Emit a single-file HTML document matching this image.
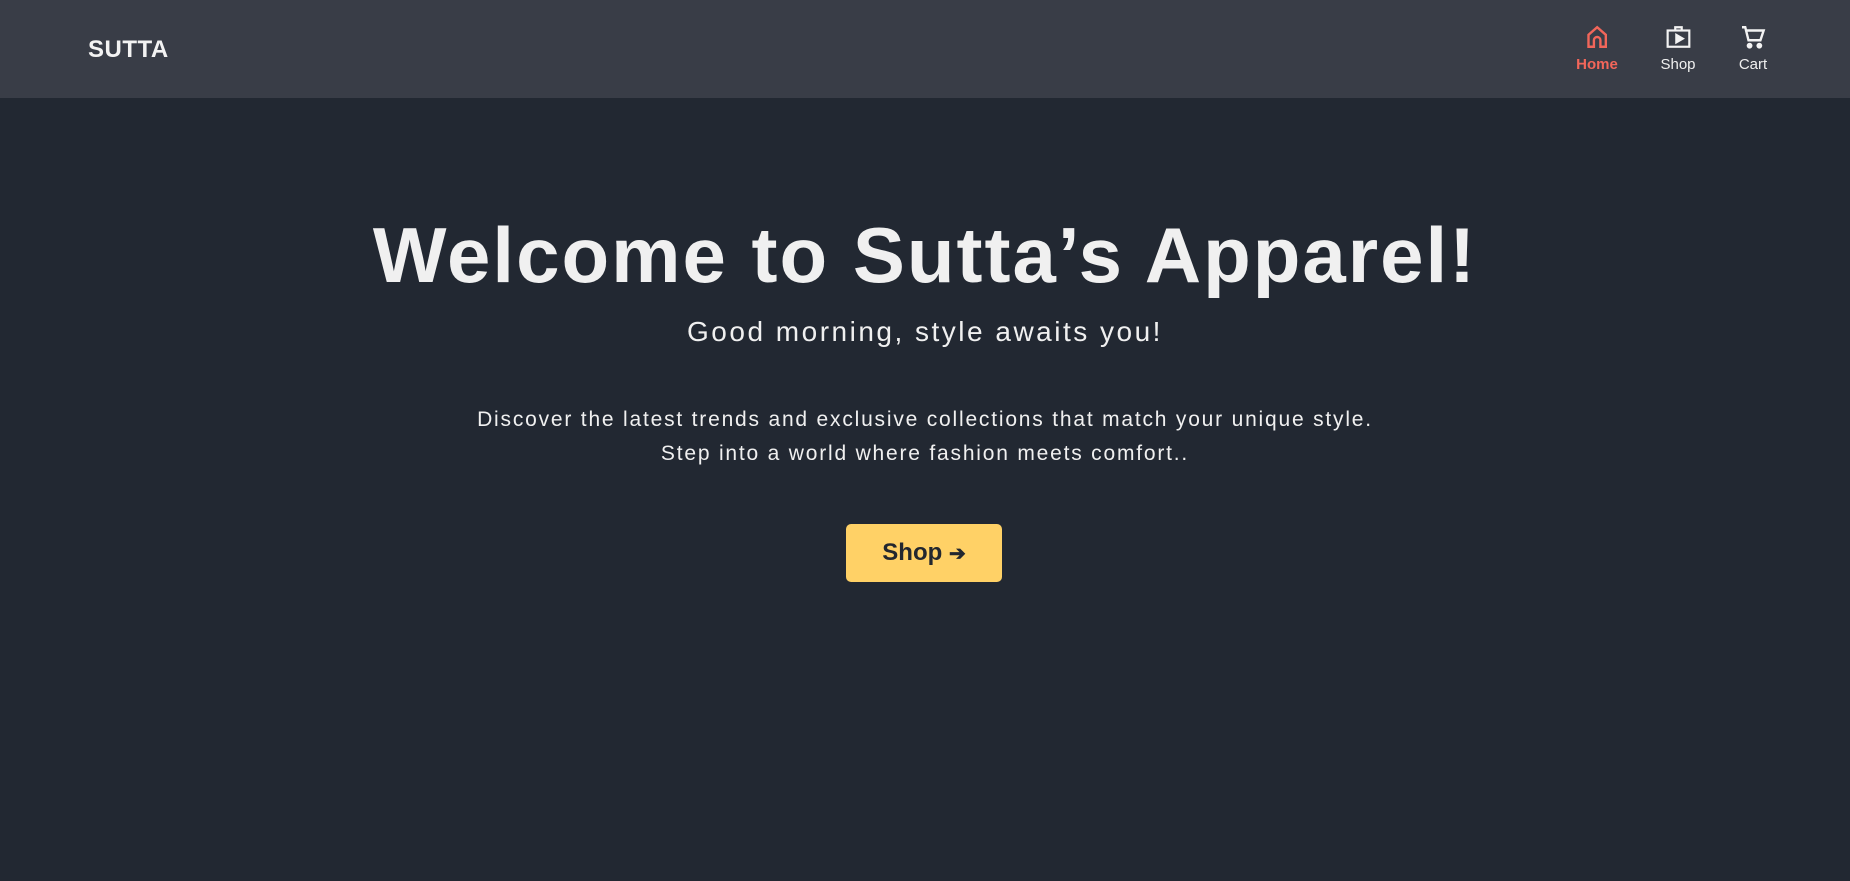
<!DOCTYPE html>
<html><head><style>
*{margin:0;padding:0;box-sizing:border-box}
body{width:1850px;height:881px;background:#222832;font-family:"Liberation Sans",sans-serif;color:#f0f0f0;overflow:hidden}
header{height:98px;background:#393d47;position:relative}
.logo{position:absolute;left:88px;top:36px;font-size:24px;font-weight:900;letter-spacing:0.5px;color:#f3f3f3}
.nav{position:absolute;top:24px;text-align:center;font-size:15px;transform:translateX(-50%)}
.nav svg{display:block;margin:0 auto 6px}
.h1{position:absolute;top:210px;width:100%;text-align:center;font-size:78px;font-weight:bold;letter-spacing:2px;color:#f0f0f0}
.sub{position:absolute;top:316px;width:100%;text-align:center;font-size:28px;letter-spacing:2.5px}
.p{position:absolute;top:403px;width:100%;text-align:center;font-size:21px;line-height:34px;letter-spacing:1.8px}
.btn{position:absolute;left:846px;top:524px;width:156px;height:58px;background:#ffd166;border-radius:5px;color:#22272f;font-weight:bold;font-size:24px;text-align:center;line-height:58px}
.btn span{font-size:20px}
</style></head><body>
<header>
<div class="logo">SUTTA</div>
<div class="nav" style="left:1597px;color:#f2665a;font-weight:bold">
<svg width="26" height="26" viewBox="0 0 24 24" fill="none" stroke="#f2665a" stroke-width="2.2"><path d="M4 21V10l8-7 8 7v11h-5v-6a3 3 0 0 0-6 0v6z"/></svg>Home</div>
<div class="nav" style="left:1678px">
<svg width="26" height="26" viewBox="0 0 24 24" fill="none" stroke="#f3f3f3" stroke-width="2"><rect x="2" y="6" width="20" height="15"/><path d="M9 6V3h6v3"/><path d="M10 10v7l6-3.5z" fill="#f3f3f3"/></svg>Shop</div>
<div class="nav" style="left:1753px">
<svg width="26" height="26" viewBox="0 0 24 24" fill="none" stroke="#f3f3f3" stroke-width="2.2"><path d="M2 3h3l3 12h11l3-9H6"/><circle cx="9" cy="20" r="1.6" fill="#f3f3f3"/><circle cx="18" cy="20" r="1.6" fill="#f3f3f3"/></svg>Cart</div>
</header>
<div class="h1">Welcome to Sutta’s Apparel!</div>
<div class="sub">Good morning, style awaits you!</div>
<div class="p">Discover the latest trends and exclusive collections that match your unique style.<br>Step into a world where fashion meets comfort..</div>
<div class="btn">Shop <span>➔</span></div>
</body></html>
